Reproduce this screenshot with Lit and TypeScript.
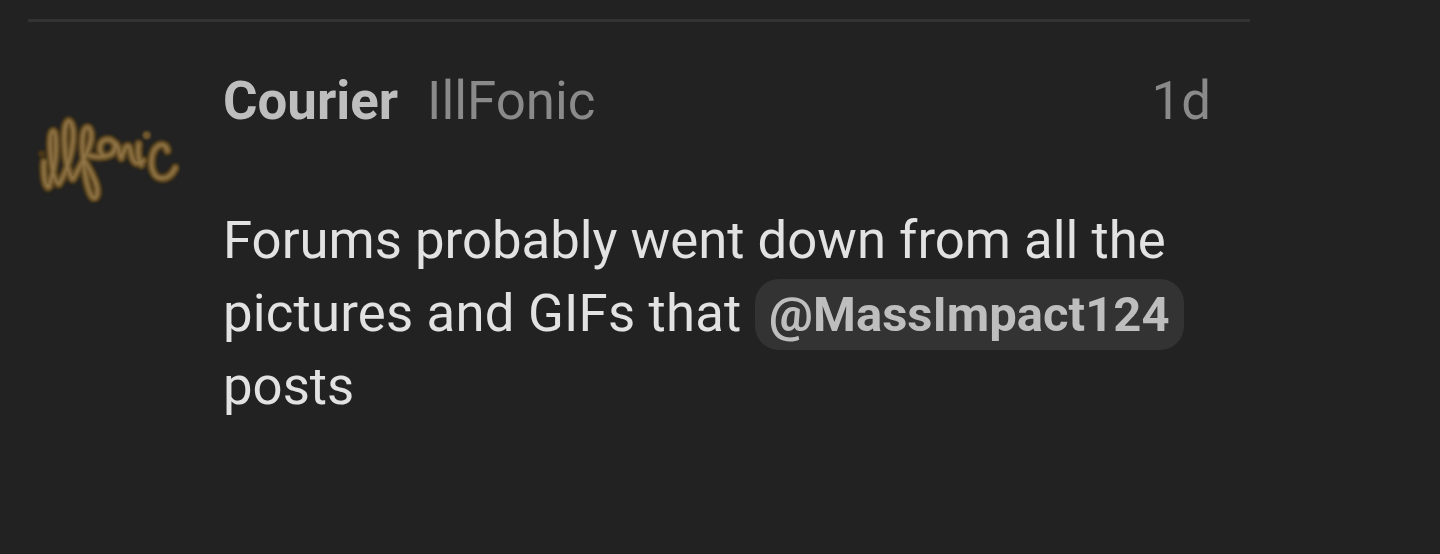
import { LitElement, html, css, svg } from "lit";
import { customElement } from "lit/decorators.js";

const LOGO = [
  "M72 186c-2 18 0 42 3 58 2 12 8 20 14 14",
  "M84 262c12-24 24-76 24-122 0-24-2-50-10-46-10 6-8 50-4 86 3 30 10 64 22 72",
  "M118 250c20-30 42-96 42-148 0-22-8-42-16-38-10 6-12 42-10 74 2 34 10 76 22 98",
  "M160 236c18-34 54-92 54-128 0-18-8-30-16-24-10 8-12 40-10 72 4 50 14 120 30 136 10 8 18-10 12-34-6-26-24-54-36-76",
  "M206 166c20 6 44 8 66-2 14-8 18-30 6-40-12-10-30-6-36 8-6 16 0 32 12 36",
  "M286 130c10 6 10 30 18 44 6-16 10-36 20-36 10 2 6 34 20 48 10 8 22 2 26-4",
  "M356 132c-2 18-4 44 8 62",
  "M442 152c-2-16-16-22-28-14-18 12-26 50-14 78 10 24 46 30 66-12",
];

@customElement("app-root")
export class AppRoot extends LitElement {
  static styles = css`
    :host { display: block; width: 1440px; height: 554px; background: #222222; font-family: Roboto, "Liberation Sans", sans-serif; overflow: hidden; }
    .wrap { margin-left: 28px; width: 1222px; }
    .rule { height: 3px; margin-top: 19px; background: #333333; }
    .post { display: flex; padding-top: 49px; }
    .avatar { width: 152px; height: 90px; margin: 42px 44px 0 0; flex: none; }
    .main { width: 988px; margin-left: -1px; }
    .head { display: flex; align-items: baseline; height: 60px; font-size: 52.8px; line-height: 60px; }
    .name { font-weight: 700; color: #bebebe; }
    .org { color: #8a8a8a; margin-left: 29px; }
    .time { color: #8a8a8a; margin-left: auto; }
    .body { margin: 73px 0 0; width: 986px; font-size: 52.7px; line-height: 73px; color: #e2e2e2; }
    .tight { letter-spacing: 0.2px; }
    .mention { display: inline-block; font-size: 49px; line-height: 71px; padding: 0 14.5px; border-radius: 24px; background: #333333; color: #bebebe; font-weight: 700; }
  `;
  render() {
    return html`<div class="wrap">
      <div class="rule"></div>
      <div class="post">
        <svg class="avatar" viewBox="24 39 456 270" fill="none" stroke-linecap="round" stroke-linejoin="round">
          <defs>
            <filter id="soft"><feGaussianBlur stdDeviation="2.5" /></filter>
          </defs>
          <g filter="url(#soft)">
            ${LOGO.map((d) => svg`<path d=${d} stroke="#463619" stroke-width="30" />`)}
            ${LOGO.map((d) => svg`<path d=${d} stroke="#6f562c" stroke-width="20" />`)}
            ${LOGO.map((d) => svg`<path d=${d} stroke="#94784a" stroke-width="6" />`)}
            <circle cx="65" cy="162" r="11" fill="#463619" />
            <circle cx="380" cy="106" r="12" fill="#6f562c" />
          </g>
        </svg>
        <div class="main">
          <div class="head"><span class="name">Courier</span><span class="org">IllFonic</span><span class="time">1d</span></div>
          <p class="body">Forums probably went down from all the <span class="tight">pictures and GIFs that</span> <span class="mention">@MassImpact124</span> posts</p>
        </div>
      </div>
    </div>`;
  }
}
